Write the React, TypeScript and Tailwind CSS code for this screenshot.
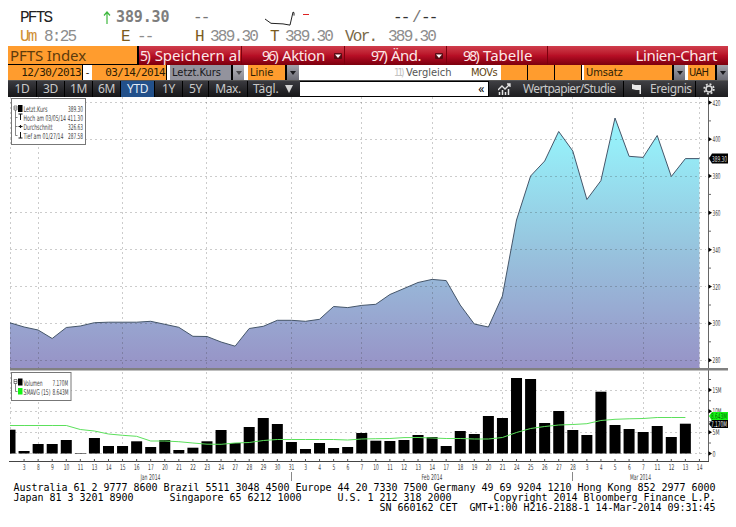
import type { ReactNode } from "react";

const STEP = 14.07;
const X0 = 10;
const BASE = 453.5;

const days = [
  "", "3", "8", "9", "10", "11", "13", "14", "15", "16", "17", "20", "21", "22", "23", "24", "27",
  "28", "29", "30", "31", "3", "4", "5", "6", "7", "10", "11", "12", "13", "14", "17", "18", "19",
  "20", "21", "24", "25", "26", "27", "28", "3", "4", "5", "6", "7", "11", "12", "13", "14",
];

const prices = [
  322.8, 327, 330, 338.5, 327.5, 326, 322.7, 322.2, 322.2, 322.2, 321.3, 324.3, 327.3, 336.3, 336.5,
  342, 346.2, 328.5, 326.3, 320.3, 320.3, 321.3, 319.3, 306.5, 307.6, 305.4, 304.3, 294.5, 288.5,
  282.5, 279.4, 280.6, 305, 324, 327, 296, 220, 176, 161, 131.5, 151, 199.5, 180.7, 118, 156.3,
  157.4, 135.5, 176.5, 158.6, 158.6,
];

const volumes = [
  429.7, 451, 444, 444, 440, 453, 438, 446, 446, 441.3, 447, 440, 450, 447.7, 441.3, 430, 443, 427,
  418, 424, 442, 449, 443, 448, 447, 433, 440.7, 441, 440, 435, 437, 446, 431, 434, 416, 418, 378,
  379, 423, 411, 430, 435, 391.7, 425, 429, 432, 426, 437, 423.7,
];

const average = [
  425.5, 425.5, 425.5, 425.5, 425.5, 429.5, 431, 434, 435.3, 436.3, 441, 441, 441.7, 443, 444.2,
  444.3, 443, 442.5, 440.5, 439.5, 439.5, 439.5, 439.5, 439.5, 440, 439, 438.7, 438.5, 437.6, 437.5,
  438, 438.5, 438.5, 439, 439, 437.5, 432.5, 428.5, 426.5, 425, 424.5, 423.7, 420.5, 419.3, 418.8,
  418.5, 417.5, 417.5, 417.5,
];

const gridColumns = [0, 2, 8, 14, 20, 25, 30, 35, 40, 45, 49];

const priceTicks = [
  { label: "420", y: 102.5 },
  { label: "400", y: 139.3 },
  { label: "380", y: 176 },
  { label: "360", y: 212.8 },
  { label: "340", y: 249.7 },
  { label: "320", y: 286.6 },
  { label: "300", y: 323.4 },
  { label: "280", y: 360.3 },
];

const volumeTicks = [
  { label: "15M", y: 390, w: 9 },
  { label: "10M", y: 411.3, w: 9 },
  { label: "5M", y: 432.3, w: 7 },
  { label: "0", y: 453.5, w: 3 },
];

const px = (i: number) => X0 + i * STEP;
const toPoints = (ys: number[]) => ys.map((y, i) => `${px(i).toFixed(1)},${y}`).join(" ");

// the terminal's chart font is very narrow
function Label({
  x,
  y,
  w,
  fill = "#444",
  children,
}: {
  x: number;
  y: number;
  w: number;
  fill?: string;
  children: string;
}) {
  return (
    <text
      transform={`translate(${x} ${y}) scale(0.6 1)`}
      textLength={w / 0.6}
      lengthAdjust="spacingAndGlyphs"
      fontSize={8}
      fill={fill}
    >
      {children}
    </text>
  );
}

function Arrow({ className = "" }: { className?: string }) {
  return (
    <div
      className={`flex h-full shrink-0 items-center justify-center bg-linear-to-b from-[#a3a3ab] to-[#6c6c76] ${className}`}
    >
      <svg width="6" height="5" viewBox="0 0 6 5">
        <path d="M0 1h6L3 5z" fill="#1b1b1f" />
      </svg>
    </div>
  );
}

function MenuArrow() {
  return (
    <svg width="8" height="6" viewBox="0 0 8 6" className="shrink-0">
      <rect width="8" height="6" rx="1" fill="#5a0a12" />
      <path d="M1 1.500h6L4 5z" fill="#fff" />
    </svg>
  );
}

function Range({ className, children }: { className: string; children: ReactNode }) {
  return (
    <div className={`flex h-full shrink-0 items-center justify-center border-r border-black ${className}`}>
      {children}
    </div>
  );
}

function Quote() {
  return (
    <header className="h-[46px] pt-2 font-['Liberation_Mono',monospace] text-[16px] tracking-[-1.75px] whitespace-pre">
      <div className="flex h-[19px] items-center pl-5">
        <span className="w-[83px] text-[#222]">PFTS</span>
        <svg width="8" height="13" viewBox="0 0 8 13" className="mr-[5px]">
          <path d="M4 13V1M1 4.5L4 1l3 3.500" fill="none" stroke="#3fb83f" strokeWidth="1.2" />
        </svg>
        <span className="w-[77px] font-['DejaVu_Sans_Mono',monospace] text-[15px] font-bold tracking-[-0.15px] text-[#7d7d7d]">
          389.30
        </span>
        <span className="w-[71px] text-[#777]">--</span>
        <svg width="50" height="19" viewBox="264 8 50 19" className="mr-[79px]">
          <path d="M265 19l6 4.300 12 .6 7 1.200 3-13 1 .5v3" fill="none" stroke="#222" />
          <rect x="303" y="14" width="6" height="1" fill="#d22" />
        </svg>
        <span className="w-[19px] text-[#333]">--</span>
        <span className="w-[9px] text-[#777]">/</span>
        <span className="text-[#333]">--</span>
      </div>
      <div className="flex h-5 items-center pl-5 text-[#8d8d8d]">
        <span className="w-6 text-[#cf8f35]">Um</span>
        <span className="w-[77px]">8:25</span>
        <span className="w-4 text-[#7a5b1e]">E</span>
        <span className="w-[58px]">--</span>
        <span className="w-[15px] text-[#7a5b1e]">H</span>
        <span className="w-[60px]">389.30</span>
        <span className="w-[15px] text-[#7a5b1e]">T</span>
        <span className="w-[60px]">389.30</span>
        <span className="w-[43px] text-[#7a6a4a]">Vor.</span>
        <span>389.30</span>
      </div>
    </header>
  );
}

function MenuBar() {
  return (
    <div className="flex h-[19px] bg-linear-to-b from-[#d03c4c] via-[#b80f26] to-[#7c000d] font-['Noto_Sans',sans-serif] text-[15px] leading-[19px] whitespace-nowrap text-[#fde8e8]">
      <div className="w-[131px] shrink-0 border-r-2 border-b border-black bg-[#ff9c2e] pl-[2px] leading-[18px] tracking-[-0.1px] text-[#5c3a0c]">
        PFTS Index
      </div>
      <div className="flex w-[103px] shrink-0 overflow-hidden border-r border-[#7c000d] pl-px">
        <span className="w-[17px] text-[14px] tracking-[-1.5px]">5)</span>
        <span>Speichern al</span>
      </div>
      <div className="flex w-[103px] shrink-0 items-center border-r border-[#7c000d] pl-5">
        <span className="w-5 text-[14px] tracking-[-1.8px]">96)</span>
        <span className="w-[52px] tracking-[-0.4px]">Aktion</span>
        <MenuArrow />
      </div>
      <div className="flex w-[102px] shrink-0 items-center border-r border-[#7c000d] pl-[26px]">
        <span className="w-5 text-[14px] tracking-[-1.8px]">97)</span>
        <span className="w-[44px] tracking-[-0.5px]">Änd.</span>
        <MenuArrow />
      </div>
      <div className="flex w-[101px] shrink-0 border-r border-[#7c000d] pl-4">
        <span className="w-5 text-[14px] tracking-[-1.8px]">98)</span>
        <span>Tabelle</span>
      </div>
      <div className="flex-1 pr-[11px] text-right tracking-[-0.4px]">Linien-Chart</div>
    </div>
  );
}

function FieldRow() {
  return (
    <div className="flex h-4 border-b border-[#555] font-['DejaVu_Sans_Condensed','DejaVu_Sans',sans-serif] text-[11px] leading-[15px] whitespace-nowrap text-[#2b1c05]">
      <div className="w-[75px] shrink-0 border-r border-black bg-[#ff9c2e] pr-px text-right font-['DejaVu_Sans_Mono',monospace] tracking-[-0.65px]">
        12/30/2013
      </div>
      <div className="w-[9px] shrink-0 text-center">-</div>
      <div className="w-[75px] shrink-0 border-r border-black bg-[#ff9c2e] pr-px text-right font-['DejaVu_Sans_Mono',monospace] tracking-[-0.65px]">
        03/14/2014
      </div>
      <div className="ml-[3px] w-[63px] shrink-0 border-r-2 border-black bg-[#93939d] pl-[2px] text-[#18181b]">
        Letzt.Kurs
      </div>
      <Arrow className="w-[11px] opacity-80" />
      <div className="ml-[4px] w-[39px] shrink-0 border-r-2 border-black bg-[#ff9c2e] pl-[2px]">
        Linie
      </div>
      <Arrow className="w-[12px]" />
      <div className="flex w-[202px] shrink-0 pl-[95px]">
        <span className="w-[12px] text-[10px] tracking-[-2.2px] text-[#c2c2c2]">11)</span>
        <span className="w-[65px] text-[#555]">Vergleich</span>
        <span className="tracking-[-0.5px] text-[#5f4612]">MOVs</span>
      </div>
      <div className="w-[27px] shrink-0 border-r border-black bg-[#ff9c2e]" />
      <div className="w-[27px] shrink-0 border-r border-black bg-[#ff9c2e]" />
      <div className="w-[27px] shrink-0 border-r border-black bg-[#ff9c2e]" />
      <div className="ml-[2px] w-[90px] shrink-0 border-r-2 border-black bg-[#ff9c2e] pl-[2px] tracking-[-0.1px]">
        Umsatz
      </div>
      <Arrow className="w-[11px]" />
      <div className="ml-[3px] w-[29px] shrink-0 border-r-2 border-black bg-[#ff9c2e] pl-px tracking-[-0.8px]">
        UAH
      </div>
      <Arrow className="w-[11px]" />
    </div>
  );
}

function Toolbar() {
  return (
    <div className="flex h-4 font-['Noto_Sans',sans-serif] text-[12px] leading-4 tracking-[-0.4px] whitespace-nowrap text-[#c9c9c9]">
      <div className="flex h-full w-[292px] shrink-0 bg-linear-to-b from-[#3a3a3f] to-[#161618]">
        <Range className="w-[29px]">1D</Range>
        <Range className="w-[28px]">3D</Range>
        <Range className="w-[28px]">1M</Range>
        <Range className="w-[28px]">6M</Range>
        <Range className="w-[34px] bg-[#22508a] text-[#e4ecf6]">YTD</Range>
        <Range className="w-[28px]">1Y</Range>
        <Range className="w-[26px]">5Y</Range>
        <Range className="w-[39px]">Max.</Range>
        <div className="flex items-center pl-[5px]">
          <span className="w-[32px] tracking-[-0.1px]">Tägl.</span>
          <svg width="8" height="8" viewBox="0 0 8 8">
            <path d="M0 0h8L4 8z" fill="#d4d4d4" />
          </svg>
        </div>
      </div>
      <div className="w-[189px] shrink-0 border-y border-r border-black bg-white pr-[4px] text-right leading-[13px] text-black">
        «
      </div>
      <div className="flex h-full flex-1 items-center bg-linear-to-b from-[#3f3f43] to-[#1d1d1f]">
        <svg width="14" height="12" viewBox="0 0 14 12" className="ml-[9px]">
          <path d="M0 7l4-4 3 3 5-5M9 1h3v3" fill="none" stroke="#e4e4e4" strokeWidth="1.300" />
          <path d="M1.500 12V9M4.500 12V7M7.500 12V9M10.500 12V6" stroke="#e4e4e4" strokeWidth="1.500" />
        </svg>
        <span className="ml-[11px] w-[100px] tracking-[-0.65px]">Wertpapier/Studie</span>
        <span className="h-full w-px bg-black" />
        <svg width="9" height="10" viewBox="0 0 9 10" className="ml-[8px]">
          <path d="M0 0l3 1h6v9H7.500V6H4L0 5z" fill="#e8e8e8" />
        </svg>
        <span className="ml-[9px] w-[45px]">Ereignis</span>
        <span className="h-full w-px bg-black" />
        <svg width="12" height="12" viewBox="0 0 12 12" className="ml-[7px]">
          <circle cx="6" cy="6" r="4.800" fill="none" stroke="#dcdcdc" strokeWidth="1.800" strokeDasharray="1.900 1.870" />
          <circle cx="6" cy="6" r="3" fill="none" stroke="#dcdcdc" strokeWidth="1.600" />
        </svg>
      </div>
    </div>
  );
}

function Chart() {
  return (
    <svg
      width="736"
      height="385"
      viewBox="0 97 736 385"
      className="block font-['DejaVu_Sans_Condensed','DejaVu_Sans',sans-serif]"
    >
      <defs>
        <linearGradient id="area" gradientUnits="userSpaceOnUse" x1="0" y1="118" x2="0" y2="369">
          <stop offset="0" stopColor="#96f2fb" />
          <stop offset="0.1" stopColor="#96eef8" />
          <stop offset="0.5" stopColor="#97c6df" />
          <stop offset="0.75" stopColor="#98acd3" />
          <stop offset="1" stopColor="#9792c6" />
        </linearGradient>
      </defs>

      <polygon points={`10,369 ${toPoints(prices)} 699.5,369`} fill="url(#area)" />

      <g stroke="#333" strokeOpacity="0.25" strokeDasharray="2 3" shapeRendering="crispEdges">
        {gridColumns.map((i) => (
          <path key={i} d={`M${px(i)} 97V454`} />
        ))}
        {priceTicks.map((t) => (
          <path key={t.label} d={`M10 ${t.y}H706`} />
        ))}
        {volumeTicks.map((t) => (
          <path key={t.label} d={`M10 ${t.y}H706`} />
        ))}
      </g>

      <polyline points={toPoints(prices)} fill="none" stroke="#45566a" />

      {volumes.map((y, i) => (
        <rect
          key={i}
          x={i === 0 ? 10 : px(i) - 5.5}
          y={y}
          width={i === 0 ? 5.5 : 11}
          height={BASE - y}
          fill="#000"
        />
      ))}
      <polyline points={toPoints(average)} fill="none" stroke="#5ce05c" />

      <path d="M708.500 97V461" stroke="#666" />
      <path d="M9 461.500H709" stroke="#444" />
      <rect x="10" y="368" width="718" height="2.500" fill="#808080" />

      {priceTicks.map((t) => (
        <g key={t.label}>
          <path d={`M708.500 ${t.y - 2.2}l3.500 2.200-3.500 2.200z`} />
          <Label x={712.5} y={t.y + 3} w={8}>
            {t.label}
          </Label>
          {t.y < 350 && <path d={`M708 ${t.y + 18.4}h3`} stroke="#666" />}
        </g>
      ))}
      {volumeTicks.map((t) => (
        <g key={t.label}>
          <path d={`M708.500 ${t.y - 2.2}l3.500 2.200-3.500 2.200z`} />
          <Label x={712.5} y={t.y + 3} w={t.w}>
            {t.label}
          </Label>
          <path d={`M708 ${t.y - 10.5}h3`} stroke="#666" />
        </g>
      ))}

      <path d="M709 158.500l3-5h16v10h-16z" />
      <Label x={712} y={161.5} w={15} fill="#ddd">
        389.30
      </Label>
      <path d="M709 416l3-4h16v9h-16z" fill="#14f414" />
      <Label x={711} y={419.2} w={16} fill="#056605">
        8.643M
      </Label>
      <path d="M709 424l3-4h16v8h-16z" />
      <Label x={711} y={427} w={16} fill="#eee">
        7.170M
      </Label>

      {days.map((d, i) =>
        d ? (
          <g key={i}>
            <path d={`M${px(i)} 459v3`} stroke="#555" />
            <Label x={px(i) - d.length * 1.4 + 0.2} y={470} w={d.length * 2.8}>
              {d}
            </Label>
          </g>
        ) : null,
      )}
      <path d="M291.500 472v9M572.500 472v9" stroke="#888" />
      <Label x={140.500} y={479.5} w={20}>Jan 2014</Label>
      <Label x={421.500} y={479.5} w={21}>Feb 2014</Label>
      <Label x={630} y={479.5} w={21}>Mar 2014</Label>

      {/* price legend */}
      <rect x="11.500" y="98.500" width="74" height="46" fill="#fff" stroke="#777" />
      <rect x="18" y="105" width="4.500" height="7" />
      <path d="M14 106h3v4h-3zM14 108h3M15.500 110v25.500h2M15.500 117.500h2M15.500 126.500h2" fill="none" stroke="#555" strokeWidth="0.700" />
      <path d="M18.500 114h4M20.500 114v6M18.500 138h4M20.500 132v6" stroke="#111" />
      <path d="M18.500 126.500h4M20.500 125v3" stroke="#111" strokeWidth="1.200" />
      <Label x={23.500} y={111.5} w={24}>Letzt.Kurs</Label>
      <Label x={68} y={111.5} w={15}>389.30</Label>
      <Label x={23.500} y={120.700} w={42.500}>Hoch am 03/05/14</Label>
      <Label x={67.500} y={120.700} w={15.500}>411.30</Label>
      <Label x={23.500} y={130} w={29}>Durchschnitt</Label>
      <Label x={68} y={130} w={15}>326.63</Label>
      <Label x={23.500} y={139.200} w={40}>Tief am 01/27/14</Label>
      <Label x={68} y={139.200} w={15}>287.58</Label>

      {/* volume legend */}
      <rect x="11.500" y="372.500" width="59.500" height="28" fill="#fff" stroke="#777" />
      <path d="M14 379.500h3v4h-3zM14 381.500h3M15.500 383.500v8h2" fill="none" stroke="#555" strokeWidth="0.700" />
      <rect x="18" y="378.500" width="4.500" height="7" />
      <rect x="18" y="388" width="4.500" height="6.500" fill="#14f414" />
      <Label x={23.500} y={385.500} w={19}>Volumen</Label>
      <Label x={52.500} y={385.500} w={15.500}>7.170M</Label>
      <Label x={23.500} y={394.500} w={27}>SMAVG (15)</Label>
      <Label x={52.500} y={394.500} w={16}>8.643M</Label>
    </svg>
  );
}

const footer = [
  "Australia 61 2 9777 8600 Brazil 5511 3048 4500 Europe 44 20 7330 7500 Germany 49 69 9204 1210 Hong Kong 852 2977 6000",
  "Japan 81 3 3201 8900      Singapore 65 6212 1000      U.S. 1 212 318 2000       Copyright 2014 Bloomberg Finance L.P.",
  "SN 660162 CET  GMT+1:00 H216-2188-1 14-Mar-2014 09:31:45",
];

export default function App() {
  return (
    <div className="h-[527px] w-[736px] overflow-hidden bg-white">
      <Quote />
      <div className="mr-2 ml-2">
        <MenuBar />
        <FieldRow />
        <Toolbar />
      </div>
      <Chart />
      <footer className="w-[715.500px] pt-px text-right font-['DejaVu_Sans_Mono',monospace] text-[10px] leading-[10px] tracking-[-0.02px] whitespace-pre text-black">
        {footer.map((line) => (
          <div key={line}>{line}</div>
        ))}
      </footer>
    </div>
  );
}
